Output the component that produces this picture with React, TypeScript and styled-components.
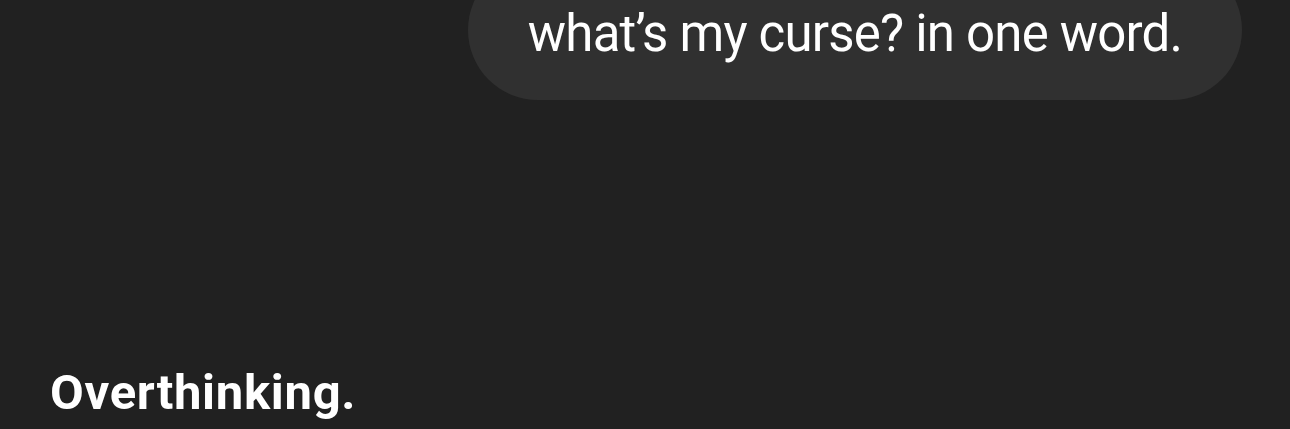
import React from "react";
import styled, { createGlobalStyle } from "styled-components";

const GlobalStyle = createGlobalStyle`
    html, body {
        margin: 0;
        padding: 0;
        background: #212121;
    }
    body {
        font-family: Roboto, "Noto Sans", sans-serif;
        -webkit-font-smoothing: antialiased;
    }
`

export default function App() {
    return (
        <>
            <GlobalStyle />
            <Chat>
                <UserRow>
                    <Bubble>what’s my curse? in one word.</Bubble>
                </UserRow>
                <Reply>Overthinking.</Reply>
            </Chat>
        </>
    )
}

const Chat = styled.div`
    width: 1290px;
    height: 429px;
    overflow: hidden;
    display: flex;
    flex-direction: column;
    justify-content: space-between;
    color: #fff;
`

const UserRow = styled.div`
    display: flex;
    justify-content: flex-end;
    padding-right: 48px;
    margin-top: -40px;
`

const Bubble = styled.div`
    width: 774px;
    box-sizing: border-box;
    height: 140px;
    border-radius: 70px;
    background: #303030;
    display: flex;
    align-items: flex-end;
    justify-content: center;
    padding-bottom: 38px;
    font-size: 51px;
    line-height: 56px;
    font-weight: 400;
    letter-spacing: -0.8px;
`

const Reply = styled.div`
    padding: 0 0 8px 50px;
    font-size: 49px;
    line-height: 56px;
    font-weight: 700;
    letter-spacing: 0.7px;
`
